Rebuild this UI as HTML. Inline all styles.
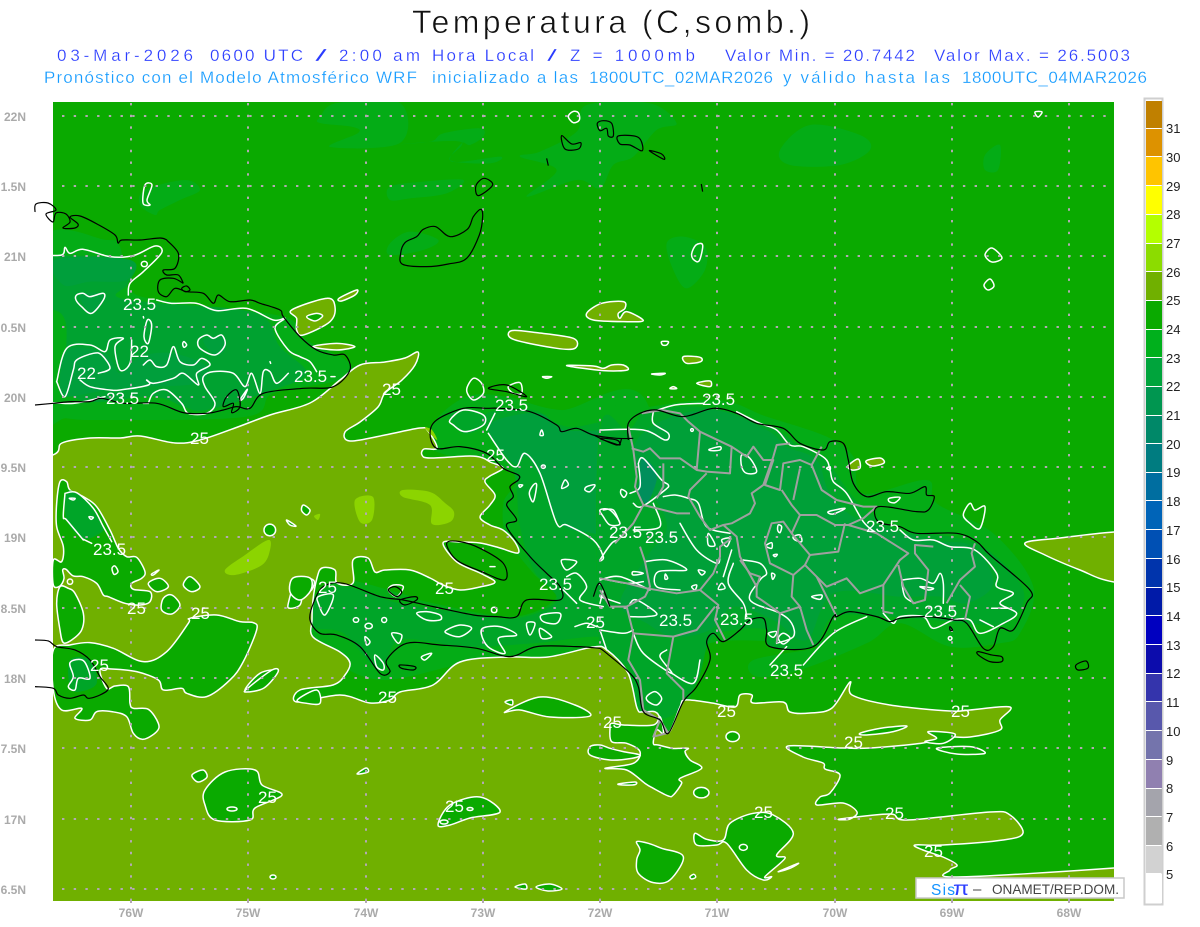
<!DOCTYPE html>
<html><head><meta charset="utf-8"><title>Temperatura</title>
<style>
html,body{margin:0;padding:0;background:#fff;width:1200px;height:927px;overflow:hidden}
svg{display:block;position:absolute;left:0;top:0}
text{font-family:"Liberation Sans",sans-serif;white-space:pre}
.w,.w *{fill:none;stroke:#fff;stroke-width:1.5;stroke-linejoin:round;stroke-linecap:round;vector-effect:non-scaling-stroke}
.b,.b *{fill:none;stroke:#000;stroke-width:1.2;stroke-linejoin:round;vector-effect:non-scaling-stroke}
.g,.g *{fill:none;stroke:#a0a0a0;stroke-width:2;stroke-linejoin:round;vector-effect:non-scaling-stroke}
.gb,.gb *{fill:#0aaa00;stroke:#fff;stroke-width:1.5;stroke-linejoin:round;vector-effect:non-scaling-stroke}
.ol,.ol *{fill:#70b000;stroke:#fff;stroke-width:1.5;stroke-linejoin:round;vector-effect:non-scaling-stroke}
.lb text{fill:#fff;font-size:17px}
.ax text{fill:#aaa;font-size:12px;font-weight:bold}
.cb text{fill:#222;font-size:13px}
.t2 text{font-size:17px;fill:#2a3cff;stroke:#fff;stroke-width:.25}
.t3 text{font-size:17px;fill:#149bff;stroke:#fff;stroke-width:.25}
</style></head><body>
<svg width="1200" height="927" viewBox="0 0 1200 927" xmlns="http://www.w3.org/2000/svg">
<defs><clipPath id="p"><rect x="53" y="102" width="1061" height="799"/></clipPath></defs>
<text x="412" y="33" font-size="32" fill="#111" stroke="#fff" stroke-width=".6" textLength="398" lengthAdjust="spacing">Temperatura (C,somb.)</text>
<g class="t2">
<text x="57" y="61" textLength="136">03-Mar-2026</text>
<text x="210" y="61" textLength="93">0600 UTC</text>
<text x="315" y="61" textLength="12" lengthAdjust="spacingAndGlyphs">/</text>
<text x="339" y="61" textLength="81">2:00 am</text>
<text x="432" y="61" textLength="102">Hora Local</text>
<text x="547" y="61" textLength="10" lengthAdjust="spacingAndGlyphs">/</text>
<text x="570" y="61" textLength="125">Z = 1000mb</text>
<text x="725" y="61" textLength="190">Valor Min. = 20.7442</text>
<text x="934" y="61" textLength="196">Valor Max. = 26.5003</text>
</g>
<g class="t3">
<text x="44" y="83" textLength="373">Pronóstico con el Modelo Atmosférico WRF</text>
<text x="432" y="83" textLength="146">inicializado a las</text>
<text x="589" y="83" textLength="184">1800UTC_02MAR2026</text>
<text x="783" y="83" textLength="167">y válido hasta las</text>
<text x="962" y="83" textLength="185">1800UTC_04MAR2026</text>
</g>

<g clip-path="url(#p)">
<rect x="53" y="102" width="1061" height="799" fill="#0aaa00"/>
<!-- upper haze -->
<g fill="#04ac16">
<path transform="translate(390,100) scale(.3333)" d="M390,170L450,155L560,95L590,15L780,10L860,70L800,90L730,170L670,195L630,265L560,240L410,290L500,210ZM0,135L120,125L160,100L270,85L280,110L240,135L215,130L185,185L330,170L300,190L180,180L210,125ZM0,300L0,260L100,245L220,240L170,280L60,295ZM0,430L60,395L145,420L100,450L0,465ZM830,430L880,410L945,440L945,510L890,565L850,510Z"/>
<path d="M780,150L810,125L860,135L870,150L840,165L790,165ZM985,155L1000,145L998,170L985,170ZM320,117L337,103L400,103L400,143L330,147L358,133L353,127L320,123ZM145,190L185,180L200,190L180,200L160,210L155,215L140,205Z"/>
</g>
<!-- Cuba -->
<g transform="translate(40,240) scale(.3333)">
<path fill="#04ac16" d="M0,10L200,0L240,20L270,150L400,185L730,230L800,300L930,370L900,420L700,460L620,530L200,540L80,535L0,520Z"/>
<path fill="#00a230" d="M0,60L270,60L265,130L230,170L360,190L650,220L720,320L800,400L700,450L500,510L430,500L340,470L100,470L75,240L0,190Z"/>
<path fill="#009f3c" d="M45,60L270,60L260,120L150,125L70,135ZM60,440L80,330L195,340L240,400L300,350L400,340L500,380L470,430L320,440L200,450L80,470ZM490,300L550,290L555,330L525,345ZM120,165L190,165L155,220Z"/>
</g>
<!-- Hispaniola halo -->
<g transform="translate(300,370) scale(.3333)">
<path fill="#04ac16" d="M400,160L500,80L620,80L780,120L1050,120L1050,990L930,960L700,870L500,880L250,930L100,870L20,770L40,680L130,630L300,670L400,700L640,740L770,680L700,610L620,500L610,400L640,310L400,240Z"/>
<path fill="#00a528" d="M560,130L700,120L800,170L1050,200L1050,800L880,800L700,820L500,830L300,810L240,900L130,790L40,770L40,690L130,650L300,700L500,730L650,745L770,690L700,600L660,470L640,300L570,200ZM450,130L550,130L550,170L490,190Z"/>
<path fill="#009f3c" d="M590,150L720,130L800,180L1050,210L1050,500L960,510L880,490L780,460L720,320L680,260L640,280L570,190Z"/>
</g>
<g transform="translate(600,390) scale(.3333)">
<path fill="#04ac16" d="M0,100L100,60L350,30L500,80L680,140L760,200L790,310L980,270L1010,340L1180,430L1300,590L1260,730L1200,760L1050,770L900,700L800,760L600,840L470,860L460,810L650,770L330,760L280,900L210,1030L180,990L100,960L90,870L0,780Z"/>
<path fill="#00a528" d="M85,120L150,60L340,55L520,115L600,170L670,200L750,310L800,360L900,420L1130,460L1270,600L1220,700L1110,700L1000,690L850,680L700,680L640,770L510,770L500,720L400,720L330,750L290,880L210,980L120,960L85,830L0,770L0,120Z"/>
<path fill="#00a038" d="M170,100L340,60L500,120L560,170L650,210L690,310L780,390L1000,450L1120,470L1180,580L1100,640L1020,620L900,620L700,610L620,750L520,690L400,650L330,720L220,740L140,700L60,640L140,500L200,400L100,200Z"/>
<path fill="#008f5c" d="M125,205L160,230L170,270L140,340L115,300L120,260Z"/>
</g>

<!-- Main olive -->
<path class="ol" d="M0,470L53,455L62,443L90,438L120,438L140,436L175,443L200,440L235,428L270,415L310,403L340,380L360,365L385,362L405,358L418,352L415,365L402,380L385,393L378,407L360,422L345,432L350,441L385,435L420,428L428,431L437,448L424,449L422,455L430,458L470,456L483,458L490,462L503,468L490,476L485,482L495,495L490,505L480,517L490,525L503,530L515,542L518,553L500,548L480,543L460,542L443,543L457,562L480,573L495,582L480,587L460,590L443,585L430,578L410,570L385,570L375,572L368,558L353,560L353,583L337,583L335,570L322,568L317,578L313,600L312,620L313,637L340,652L350,663L345,675L333,685L300,690L297,702L340,695L370,703L390,700L400,692L433,685L460,662L507,657L548,657L593,647L607,650L628,673L637,708L643,712L657,713L668,733L680,707L685,700L712,703L735,707L740,695L752,695L753,703L783,702L790,712L810,713L832,708L850,682L852,695L890,705L950,711L970,710L1010,707L1000,720L1000,730L970,737L943,737L923,743L870,748L843,748L788,746L803,757L823,763L825,769L840,775L830,793L820,797L817,805L843,803L857,812L850,819L840,819L890,814L907,820L990,812L1010,815L1023,833L1003,840L943,845L915,845L923,850L943,857L957,865L950,870L957,877L1114,868L1190,860L1190,900L1190,920L600,920L0,920L0,900Z"/>
<path class="ol" d="M1190,528L1114,532L1060,538L1025,543L1045,555L1080,570L1114,582L1190,590Z"/>
<g class="ol" transform="translate(390,100) scale(.3333)">
<path d="M590,640L635,610L700,605L705,625L685,640L690,655L710,635L760,662L700,665L610,660Z"/>
<path d="M365,692L440,698L550,715L555,745L500,745L370,718Z"/>
<path d="M530,797L610,798L640,805L665,795L700,795L712,810L640,812Z"/>
<path d="M880,770L930,772L932,785L890,790Z"/>
<path d="M785,822L825,820L810,825Z"/><path d="M458,830L485,830L470,835Z"/>
<path d="M920,850L960,843L960,860Z"/>
<path d="M850,860L860,866L840,866Z"/>
</g>
<g class="ol" transform="translate(40,240) scale(.3333)">
<path d="M755,210L860,175L885,200L870,245L790,285L770,270L770,235Z"/>
<path d="M897,175L950,150L945,165L905,183Z"/>
<path d="M818,320L890,310L945,320L890,330Z"/>
</g>
<g class="gb" transform="translate(40,240) scale(.3333)"><path d="M800,230L830,220L848,228L825,243Z"/></g>
<path class="ol" d="M848,466L858,459L860,468L852,470ZM866,461L880,458L884,463L872,466Z"/>
<!-- light olive -->
<g fill="#8cd400">
<path d="M225,570L245,555L268,540L270,550L262,565L235,575Z"/>
<path d="M403,490L430,492L445,503L454,512L450,522L432,524L430,505L403,497Z"/>
<path d="M355,500L373,497L372,520L360,522Z"/>
<path d="M314,516L320,514L318,520Z"/>
</g>
<path fill="#8cd400" d="M425,428L432,430L437,440Z"/>

<!-- green blobs in the olive -->
<g class="gb" transform="translate(40,470) scale(.3333)">
<path d="M40,270L65,275L70,230L50,170L50,100L60,35L80,35L90,60L130,80L170,110L210,180L235,235L260,260L290,262L315,305L305,325L275,340L280,358L330,365L330,395L300,405L255,400L205,380L190,375L170,340L130,320L100,318L78,298L68,300L72,325L60,348L40,345Z"/>
<path d="M60,350L85,355L105,370L130,430L125,480L95,510L70,518L60,480L50,400Z"/>
<path d="M40,540L90,525L150,518L220,535L310,575L380,545L445,460L450,445L530,435L600,455L640,458L650,480L610,575L570,630L500,680L440,670L425,655L370,660L355,630L290,605L215,597L180,600L200,655L225,648L265,650L270,700L280,715L325,718L355,760L350,785L310,808L280,790L260,740L215,725L170,725L150,750L105,745L125,715L65,720L40,660Z"/>
<path d="M395,375L420,405L395,432L365,420L370,385Z"/>
<path d="M430,345L450,320L480,350L455,365Z"/>
<path d="M325,340L360,325L385,350L350,365Z"/>
<path d="M672,180A13,13 0 1 0 707,180A13,13 0 1 0 672,180Z"/>
<path d="M790,105L810,120L800,135L785,122Z"/>
<path d="M740,150L768,168L750,165Z"/><path d="M335,312L357,300L340,315Z"/>
<path d="M225,288L234,305L222,313L216,295Z"/>
<path d="M745,400L770,330L820,330L815,360L790,370L780,405L750,415Z"/>
<path d="M615,660L660,610L712,600L700,620L650,658Z"/>
<path d="M772,690L830,660L840,700L800,700Z"/>
</g>
<path fill="#00a528" transform="translate(40,470) scale(.3333)" d="M80,70L115,70L160,115L190,170L180,190L130,205L80,150Z"/>
<path fill="#00a528" transform="translate(40,470) scale(.3333)" d="M90,570L150,570L170,640L120,665L90,650Z"/>
<g class="w" transform="translate(40,470) scale(.3333)">
<path d="M75,70L110,68L160,115L190,170L215,215M130,208L155,220M130,210L80,150L70,140L75,70M88,85L105,85L100,90ZM147,140L160,142L153,148Z"/>
<path d="M90,578L130,572L150,625L115,625L105,660L85,650L100,620Z"/>
<path d="M82,335A8,8 0 1 0 98,335A8,8 0 1 0 82,335Z"/>
</g>
<g class="gb" transform="translate(590,680) scale(.3333)">
<path d="M60,145L65,185L110,190L150,215L130,250L45,265L110,270L165,310L190,325L235,348L250,345L275,310L270,295L335,265L300,240L285,215L295,205L265,205L245,205L205,195L190,190L200,150L220,160L210,110L190,135L100,135L65,130Z"/>
<path d="M0,200L30,195L60,205L100,215L150,225L125,235L60,240L0,225Z" fill="#70b000"/>
<path d="M315,460L350,478L400,480L420,430L490,400L550,405L610,460L560,525L585,535L525,590L545,590L520,600L470,570L410,490L380,495L320,495Z"/>
<path d="M140,485L175,490L215,505L280,530L240,600L190,608L145,580L140,540L150,510Z"/>
<path d="M408,170A20,15 0 1 0 448,170A20,15 0 1 0 408,170Z"/>
<path d="M311,338A22,15 0 1 0 357,338A22,15 0 1 0 311,338Z"/>
<path d="M448,502A12,9 0 1 0 472,502A12,9 0 1 0 448,502Z"/>
<path d="M565,575L625,550L600,565Z"/>
<path d="M300,590L312,583L317,592L305,597Z"/>
<path d="M810,160L870,145L950,138L910,155L830,165Z"/>
<path d="M1005,185L1040,175L1015,155L1095,162L1060,190Z"/>
<path d="M1040,205L1140,200L1185,220L1100,222Z"/>
<path d="M85,312L135,306L135,314L100,315Z" fill="#ddd"/>
</g>
<g class="gb">
<ellipse cx="273" cy="877" rx="3" ry="2"/>
<path d="M505,712L540,697L575,705L590,716L550,717L520,710Z"/>
<path d="M205,790L225,772L255,770L262,785L282,795L255,808L250,820L215,820L205,805Z"/>
<path d="M438,825L450,805L480,797L500,812L470,818L450,825Z"/>
<ellipse cx="232" cy="809" rx="5" ry="2"/><ellipse cx="444" cy="822" rx="4" ry="2"/><ellipse cx="470" cy="809" rx="3" ry="1.500"/>
<path d="M515,887L525,884L526,889Z"/><path d="M536,887L550,884L562,889L548,891Z"/>
<path d="M192,775L203,770L207,777L198,782Z"/><path d="M357,774L366,768L368,772Z"/>
<path d="M505,702L512,700L512,705Z"/><path d="M293,578L310,578L311,590L300,600L290,592Z"/>
<path d="M248,688L272,670L278,672L264,688L246,692Z"/>
<path d="M985,255L992,248L1002,258L992,262Z"/>
<path d="M984,285L990,279L994,286L988,290Z"/>
</g>
<!-- white contours Cuba -->
<g class="w" transform="translate(40,240) scale(.3333)">
<path d="M0,45L65,45L75,22L90,40L130,28L210,50L280,47L345,18L365,38L310,95L270,130L265,165"/>
<path d="M304,72A9,8 0 1 0 322,72A9,8 0 1 0 304,72Z"/>
<path d="M350,180L395,190L470,190L530,212L620,205L700,240L735,235L705,265L745,330L780,350L810,365L830,395"/>
<path d="M745,400L710,430L690,395L670,395L660,460L635,400L615,440L580,400L520,395L490,410L495,440L525,490L500,520L445,520L425,490L380,450L340,460L325,490"/>
<path d="M50,425L80,325L150,315L195,335L210,300L250,295L225,320L240,390L270,370L275,300"/>
<path d="M50,425L75,470L100,390L110,360L160,340L185,345L210,385L175,400M120,420L150,440L210,450L240,450L325,435L320,420L340,430L400,415L430,400L475,435L470,400L510,375L485,355L460,375L420,365L400,320L380,375L350,380L330,360L310,375"/>
<path d="M110,165L130,160L150,170L190,160L190,180L155,220L125,200L108,180Z"/>
<path d="M475,300L500,285L520,295L545,285L555,315L525,345L480,325Z"/>
<path d="M322,240L335,255L325,310L312,290Z"/>
<path d="M432,305L440,315L432,322L428,312Z"/>
<path d="M0,485L100,490L195,470M325,490L310,490"/>
<path d="M600,480L622,448L610,475Z"/>
<path d="M873,410L885,410"/><path d="M690,365L692,370"/><path d="M310,230L311,234"/>
</g>
<g class="w" transform="translate(390,100) scale(.3333)">
<path d="M548,35L565,38L568,60L550,68L535,50Z"/>
<path d="M918,435L938,435L928,482L912,480L905,462Z"/>
<path d="M815,725L835,725L830,735L818,735Z"/>
</g>
<g class="w"><path d="M145,185L152,185L147,200L150,205L143,203Z"/><path d="M1035,112L1042,112L1038,117Z"/></g>

<!-- Haiti whites -->
<g class="w" transform="translate(300,370) scale(.3333)">
<path d="M500,60L520,25L545,40L550,70L520,90Z"/>
<path d="M625,50L660,38L665,70L640,70Z"/>
<path d="M450,150L490,120L550,135L550,165L495,185L460,165Z"/>
<path d="M560,180L585,130M565,190L620,270L650,290L675,250L720,310L770,460L800,465L880,510L910,560L900,570L935,520L955,510"/>
<path d="M657,345L668,345L660,352Z"/>
<path d="M700,345L710,345L700,395L688,370Z"/>
<path d="M795,330L805,345L785,355Z"/><path d="M860,350L885,345L870,365L855,360Z"/>
<path d="M910,420L940,420L960,460"/><path d="M725,180L730,195L720,195Z"/><path d="M724,290A6,5 0 1 0 736,290A6,5 0 1 0 724,290Z"/>
<path d="M785,570L830,575L800,600Z"/>
<path d="M800,620L830,610L860,650L840,690L910,710M790,660L830,700"/>
<path d="M900,630L960,620L1050,660"/>
<path d="M350,730L380,725L420,735L420,750L380,750Z"/>
<path d="M440,780L480,765L515,775L480,800L440,790Z"/>
<path d="M548,775L600,770L650,795L595,805L615,850L570,835L548,805Z"/>
<path d="M680,760L705,760L690,795Z"/>
<path d="M725,735L780,730L770,760L730,755Z"/>
<path d="M720,775L755,800L725,805Z"/>
<path d="M160,750A8,7 0 1 0 176,750A8,7 0 1 0 160,750Z"/>
<path d="M195,768A11,8 0 1 0 217,768A11,8 0 1 0 195,768Z"/>
<path d="M245,750A7,7 0 1 0 260,750A7,7 0 1 0 245,750Z"/>
<path d="M195,800L210,815L200,825Z"/>
<path d="M275,790L305,795L295,820Z"/>
<path d="M225,855L250,880L250,900L230,890Z"/>
<path d="M365,860L395,850L375,870Z"/>
<path d="M55,680L100,675L75,735L55,700Z"/>
<path d="M280,645L310,650L290,680L265,660Z"/>
<path d="M575,720A8,6 0 1 0 590,720A8,6 0 1 0 575,720Z"/>
<path d="M570,590L585,590"/>
<path d="M825,770L860,760L890,770M900,780L920,840"/>
</g>
<!-- DR whites -->
<g class="w" transform="translate(600,390) scale(.3333)">
<path d="M160,65L225,45L310,40"/>
<path d="M410,65L480,100L530,120L570,165L610,170L675,205L690,240L700,275L740,310L790,395L830,430"/>
<path d="M900,420L940,450L1000,450L1050,470L1125,480L1190,550L1190,590L1240,610L1200,640L1250,670L1210,700L1140,730L1110,690L1060,690L1000,715L970,680L900,680L880,700L850,670"/>
<path d="M610,825L700,730L800,680M510,825L560,770"/>
<path d="M160,65L160,100L205,130L195,150L130,120L0,120"/>
<path d="M115,220L130,205L185,270L205,285L195,300L125,350L100,340M90,310L120,290L115,220"/>
<path d="M160,340L180,410L100,420"/>
<path d="M190,320L225,315L265,325L295,340L320,410L390,430"/>
<path d="M240,400L290,480L350,520L360,500"/>
<path d="M0,360L30,360L60,400L30,405L10,380Z"/>
<path d="M135,515L200,510L260,540L175,545L170,590L240,600"/>
<path d="M400,520L385,580L430,640L440,680"/>
<path d="M430,510L480,520L500,550L480,570L450,630L540,670L575,700L580,740L530,760"/>
<path d="M905,575L915,620L945,640M905,570L960,565L1000,580L1020,550L1030,580L1030,640"/>
<path d="M0,565L80,580L130,575M90,680L140,680L170,670L110,630L90,640"/>
<path d="M100,730L130,790L215,850L180,800L200,780M215,850L280,880L300,810"/>
<path d="M0,720L70,730L100,720M0,620L60,640"/>
<path d="M425,195L450,205L470,245L440,250L425,230Z"/>
<path d="M328,178L360,170L360,180L335,182Z"/>
<path d="M685,365L735,355L700,372Z"/>
<path d="M868,325L900,322L885,338L868,335Z"/>
<path d="M580,440L600,435L605,455L585,450Z"/>
<path d="M535,405L545,410L540,428L533,420Z"/>
<path d="M498,468L515,458L515,475Z"/>
<path d="M520,495L532,493L526,500Z"/>
<path d="M515,550L525,555L518,568Z"/>
<path d="M295,540L315,545L305,555Z"/>
<path d="M365,580L375,595L355,598Z"/>
<path d="M196,552L203,565L195,567Z"/>
<path d="M100,545L130,550L100,555Z"/>
<path d="M65,298L80,308L72,322L62,310Z"/>
<path d="M140,920L165,905L185,925L170,945L145,935Z"/>
<path d="M535,745L550,730L570,745L550,762Z"/>
<path d="M505,730L530,725L520,742Z"/>
<path d="M1090,375L1110,340L1125,360L1155,350L1140,415L1110,400Z"/>
<path d="M370,560L395,480M325,430L345,465L325,465Z"/>
<path d="M365,450L390,445L380,470Z"/>
<path d="M1045,745A5,5 0 1 0 1056,745A5,5 0 1 0 1045,745Z"/>
<path d="M272,120A4,4 0 1 0 280,120A4,4 0 1 0 272,120Z"/>
<path d="M680,235L690,230L690,240Z"/>
<path d="M10,600L0,640M1175,655L1225,655M1140,690L1180,710"/>
<path d="M635,620L665,615L660,628Z"/>
<path d="M275,590L290,585L285,600Z"/>
<path d="M1000,595L960,590L985,600Z"/>
</g>

<!-- grid dots -->
<g stroke="#b4a8b4" stroke-width="2" stroke-dasharray="2.400 9.300" fill="none">
<path d="M131,103V901M248,103V901M366,103V901M483,103V901M600,103V901M717,103V901M835,103V901M952,103V901M1069,103V901"/>
<path d="M38.600,116H1114M38.600,186H1114M38.600,256H1114M38.600,327H1114M38.600,397H1114M38.600,467H1114M38.600,537H1114M38.600,608H1114M38.600,678H1114M38.600,748H1114M38.600,819H1114M38.600,889H1114"/>
</g>

<!-- gray borders -->
<g class="g" transform="translate(600,390) scale(.3333)">
<path d="M85,110L100,180L110,260L105,290L130,345L100,400L45,460M120,470L135,515L150,590L135,620L80,650L100,730L85,810L120,870L130,960L180,990L205,1030"/>
<path d="M95,175L130,185L150,175L180,205L240,205L290,240L320,245L390,250L395,170L300,125L265,95L240,70L185,60L125,70"/>
<path d="M300,125L290,240"/>
<path d="M320,250L270,300L265,320L300,380L330,420L370,405L395,400L450,370L465,340L455,310L490,285L520,200L530,165L570,160"/>
<path d="M395,170L440,200L460,170L490,210L520,210L495,285L540,300L550,220L600,210L635,225L665,170"/>
<path d="M635,225L665,300L710,330L790,350L830,350L790,385L745,405L705,405L650,375L600,375L575,345L545,300"/>
<path d="M600,235L580,330"/>
<path d="M600,375L575,430L630,495L715,485L735,400"/>
<path d="M630,495L615,525L580,555L510,520L495,460L515,400L550,395L575,430"/>
<path d="M615,525L650,560L680,590L740,565L780,610L850,585L900,510L925,490L830,430L745,405"/>
<path d="M650,560L700,660L710,680"/>
<path d="M580,555L575,620L600,650L620,720L640,765"/>
<path d="M600,650L540,670L530,760"/>
<path d="M850,585L850,665L880,670"/>
<path d="M895,525L910,590L940,640L975,630L985,540L945,490L945,465L1000,470"/>
<path d="M1125,460L1115,490L1125,530L1080,570L1040,640"/>
<path d="M1080,585L1110,620L1095,690"/>
<path d="M370,405L410,440L420,500L470,590L470,620L520,655L540,670"/>
<path d="M420,510L450,550L480,560L470,590"/>
<path d="M395,445L360,470L360,500L340,550L300,600L355,645L345,690L375,750"/>
<path d="M300,600L230,610L140,595L80,580L0,565"/>
<path d="M345,650L290,720L220,740L100,730"/>
<path d="M220,740L200,850L250,900L250,930"/>
<path d="M130,345L230,370L270,370"/>
<path d="M190,220L190,290L170,325"/>
<path d="M0,600L30,650L80,650"/>
<path d="M180,990L160,1040L200,1030"/>
</g>
</g>

<!-- black coast (unclipped, extends left) -->
<g class="b" transform="translate(40,240) scale(.3333)">
<path d="M-15,495L40,490L95,485L150,485L185,475L250,490L350,490L430,518L500,520L550,510L590,500L630,505L670,460L790,445L880,440L930,390L915,345L880,345L830,330L780,290L730,230L720,210L660,190L630,180L570,185L535,165L520,190L490,160L440,155L405,145L380,170L355,155L360,120L400,115L430,130"/>
<path d="M430,130L415,105L380,105L370,90L405,85L415,40L380,0"/>
<path d="M425,145L440,138L450,150L435,155Z"/>
<path d="M560,470L590,450L600,500L575,518L580,490L550,500Z"/>
</g>
<g class="b">
<path d="M35,212L36,204L48,203L56,210L46,214L53,222L56,213L66,214L70,222L63,228L75,228L78,224L70,217L80,216L97,224L115,235L118,243L122,240L140,240L160,238L167,240"/>
</g>
<g class="b" transform="translate(40,470) scale(.3333)">
<path d="M-15,510L25,513L50,530L105,540L150,570L180,620L205,655L180,675L145,685L130,675L90,685L55,675L40,655L-15,650"/>
</g>
<g class="b"><path d="M1076,665L1086,661L1088,668L1078,670Z"/></g>
<g class="b" transform="translate(390,100) scale(.3333)">
<path d="M622,70L640,62L665,70L670,108L655,108L650,85L630,92Z"/>
<path d="M685,108L745,112L757,152L720,135L690,132Z"/>
<path d="M515,107L545,132L572,128L565,147L525,147Z"/>
<path d="M778,152L815,162L822,178Z"/>
<path d="M470,175L475,197"/><path d="M934,252L938,275"/>
<path d="M258,257L282,235L308,255L265,287Z"/>
<path d="M32,460L45,428L80,410L100,388L137,380L180,410L232,388L250,350L272,328L278,350L268,405L230,475L175,492L110,500L38,493Z"/>
</g>
<g class="b" transform="translate(300,370) scale(.3333)">
<path d="M1000,205L950,205L880,195L830,175L785,185L770,165L690,125L600,115L560,115L490,115L410,150L390,190L410,235L480,230L560,250L610,295L655,315L655,330L630,350L640,380L620,405L650,450L620,470L690,560L740,610L780,650L780,690L680,690L650,740L590,740L520,735L400,710L310,690L240,680L130,640L70,650L40,700L30,750L60,790L110,795L180,830L240,910L270,905L260,870L320,820L420,825L530,835L630,860L710,830L830,830L900,835"/>
<path d="M440,520L480,515L540,535L610,580L615,630L545,605L470,570Z"/>
<path d="M565,55L620,45L680,80L620,65Z"/>
<path d="M265,660L285,650L305,665L290,680Z"/><path d="M300,885L345,890L340,900L305,895Z"/>
<path d="M300,690L345,680L350,690L315,705Z"/>
<path d="M880,195L950,225L965,205"/><path d="M880,680L900,640L930,710"/>
</g>
<g class="b" transform="translate(600,390) scale(.3333)">
<path d="M85,150L85,100L120,70L170,60L250,80L340,55L410,70L470,100L550,115L600,160L670,180L690,155L730,160L745,210L760,280L800,320L860,305L930,310L975,290L980,315L1003,320L985,360L950,365L835,350L835,395L900,410L950,430L1070,430L1130,455L1170,495L1290,600L1280,640L1240,720L1200,715L1180,770L1150,775L1100,700L1060,690L980,680L900,685L870,695L830,680L750,665L710,680L700,680L640,770L510,770L500,720L490,685L450,690L420,720L370,755L340,730L320,755L330,810L290,890L250,935L205,1030L180,990L130,965L115,890L90,850L20,790L0,775"/>
<path d="M1135,785L1175,795L1205,800L1205,815L1170,815L1135,795Z"/>
<path d="M1050,710L1058,720L1050,720Z"/>
<path d="M0,145L50,150L60,165L40,160Z"/>
</g>

<!-- contour labels -->
<g class="lb">
<text x="123" y="310">23.5</text><text x="130" y="357">22</text><text x="77" y="379">22</text><text x="106" y="404">23.5</text><text x="294" y="382">23.5</text><text x="382" y="395">25</text><text x="190" y="444">25</text>
<text x="495" y="411">23.5</text><text x="702" y="405">23.5</text><text x="486" y="461">25</text><text x="866" y="532">23.5</text><text x="609" y="538">23.5</text><text x="645" y="543">23.5</text><text x="93" y="555">23.5</text><text x="539" y="590">23.5</text>
<text x="318" y="593">25</text><text x="435" y="594">25</text><text x="127" y="614">25</text><text x="191" y="619">25</text><text x="586" y="628">25</text><text x="659" y="626">23.5</text><text x="720" y="625">23.5</text><text x="924" y="617">23.5</text><text x="90" y="671">25</text><text x="770" y="676">23.5</text><text x="378" y="703">25</text>
<text x="717" y="717">25</text><text x="951" y="717">25</text><text x="603" y="728">25</text><text x="844" y="748">25</text><text x="258" y="803">25</text><text x="445" y="812">25</text><text x="754" y="818">25</text><text x="885" y="819">25</text><text x="924" y="857">25</text>
</g>

<!-- axes -->
<g class="ax" text-anchor="end">
<text x="26" y="121">22N</text><text x="26" y="191">1.5N</text><text x="26" y="261">21N</text><text x="26" y="332">0.5N</text><text x="26" y="402">20N</text><text x="26" y="472">9.5N</text><text x="26" y="542">19N</text><text x="26" y="613">8.5N</text><text x="26" y="683">18N</text><text x="26" y="753">7.5N</text><text x="26" y="824">17N</text><text x="26" y="894">6.5N</text>
</g>
<g class="ax" text-anchor="middle">
<text x="131" y="917">76W</text><text x="248" y="917">75W</text><text x="366" y="917">74W</text><text x="483" y="917">73W</text><text x="600" y="917">72W</text><text x="717" y="917">71W</text><text x="835" y="917">70W</text><text x="952" y="917">69W</text><text x="1069" y="917">68W</text>
</g>
<g stroke="#b4a8b4" stroke-width="2" stroke-dasharray="2 7" fill="none"><path d="M131,901V906M248,901V906M366,901V906M483,901V906M600,901V906M717,901V906M835,901V906M952,901V906M1069,901V906"/></g>

<!-- legend box -->
<rect x="916" y="878" width="208" height="20" fill="#fff" stroke="#c8c8c8" stroke-width="1.500"/>
<text x="931" y="895" font-size="15.500" fill="#1493ff" textLength="24">Sis</text>
<text x="953" y="895" font-size="19" fill="#2a3cff" textLength="16" lengthAdjust="spacingAndGlyphs">π</text>
<text x="973" y="894" font-size="15" fill="#444">–</text>
<text x="992" y="894" font-size="14" fill="#444" textLength="127" lengthAdjust="spacingAndGlyphs">ONAMET/REP.DOM.</text>

<!-- colour bar -->
<rect x="1144.500" y="98.500" width="18" height="806" fill="#fff" stroke="#cfcfcf" stroke-width="2"/>
<g stroke="none">
<rect x="1146" y="101" width="16" height="27" fill="#c08000"/>
<rect x="1146" y="129" width="16" height="27" fill="#dd9200"/>
<rect x="1146" y="157" width="16" height="28" fill="#ffc400"/>
<rect x="1146" y="186" width="16" height="28" fill="#ffff00"/>
<rect x="1146" y="215" width="16" height="28" fill="#b4ff00"/>
<rect x="1146" y="244" width="16" height="27" fill="#8cdc00"/>
<rect x="1146" y="272" width="16" height="28" fill="#70b000"/>
<rect x="1146" y="301" width="16" height="28" fill="#0aaa00"/>
<rect x="1146" y="330" width="16" height="27" fill="#00b01c"/>
<rect x="1146" y="358" width="16" height="28" fill="#00a43c"/>
<rect x="1146" y="387" width="16" height="28" fill="#009650"/>
<rect x="1146" y="416" width="16" height="27" fill="#008868"/>
<rect x="1146" y="444" width="16" height="28" fill="#007c80"/>
<rect x="1146" y="473" width="16" height="27" fill="#006ea0"/>
<rect x="1146" y="501" width="16" height="28" fill="#0064b8"/>
<rect x="1146" y="530" width="16" height="28" fill="#0050b4"/>
<rect x="1146" y="559" width="16" height="28" fill="#0034ac"/>
<rect x="1146" y="588" width="16" height="27" fill="#001aa8"/>
<rect x="1146" y="616" width="16" height="28" fill="#0000c0"/>
<rect x="1146" y="645" width="16" height="28" fill="#0c0cac"/>
<rect x="1146" y="674" width="16" height="27" fill="#3434ac"/>
<rect x="1146" y="702" width="16" height="28" fill="#5858ac"/>
<rect x="1146" y="731" width="16" height="28" fill="#7474ac"/>
<rect x="1146" y="760" width="16" height="28" fill="#9080b0"/>
<rect x="1146" y="789" width="16" height="27" fill="#a4a4ac"/>
<rect x="1146" y="817" width="16" height="28" fill="#b0b0b0"/>
<rect x="1146" y="846" width="16" height="27" fill="#d2d2d2"/>
<rect x="1146" y="874" width="16" height="29" fill="#fff"/>
</g>
<g class="cb">
<text x="1166" y="133">31</text><text x="1166" y="162">30</text><text x="1166" y="191">29</text><text x="1166" y="219">28</text><text x="1166" y="248">27</text><text x="1166" y="277">26</text><text x="1166" y="305">25</text><text x="1166" y="334">24</text><text x="1166" y="363">23</text><text x="1166" y="391">22</text><text x="1166" y="420">21</text><text x="1166" y="449">20</text><text x="1166" y="477">19</text><text x="1166" y="506">18</text><text x="1166" y="535">17</text><text x="1166" y="564">16</text><text x="1166" y="592">15</text><text x="1166" y="621">14</text><text x="1166" y="650">13</text><text x="1166" y="678">12</text><text x="1166" y="707">11</text><text x="1166" y="736">10</text><text x="1166" y="765">9</text><text x="1166" y="793">8</text><text x="1166" y="822">7</text><text x="1166" y="851">6</text><text x="1166" y="879">5</text>
</g>
</svg>
<script>
document.querySelectorAll('path').forEach(function(p){
  if(p.closest('.g'))return;
  var d=p.getAttribute('d');
  if(/[AaVvHhCc]/.test(d))return;
  var out=d.split(/(?=M)/).map(function(s){
    var closed=/Z\s*$/.test(s);
    var n=s.match(/-?[\d.]+/g)||[];var a=[];
    for(var i=0;i+1<n.length;i+=2)a.push([+n[i],+n[i+1]]);
    if(a.length<3)return s;
    var L=a.length,r='M'+a[0][0]+','+a[0][1];
    var g=function(i){return closed?a[(i+L)%L]:a[Math.max(0,Math.min(L-1,i))];};
    var e=closed?L:L-1;
    for(i=0;i<e;i++){
      var p0=g(i-1),p1=g(i),p2=g(i+1),p3=g(i+2);
      r+='C'+(p1[0]+(p2[0]-p0[0])/6).toFixed(1)+','+(p1[1]+(p2[1]-p0[1])/6).toFixed(1)+' '+(p2[0]-(p3[0]-p1[0])/6).toFixed(1)+','+(p2[1]-(p3[1]-p1[1])/6).toFixed(1)+' '+p2[0]+','+p2[1];
    }
    return r+(closed?'Z':'');
  }).join('');
  p.setAttribute('d',out);
});
</script>
</body></html>
